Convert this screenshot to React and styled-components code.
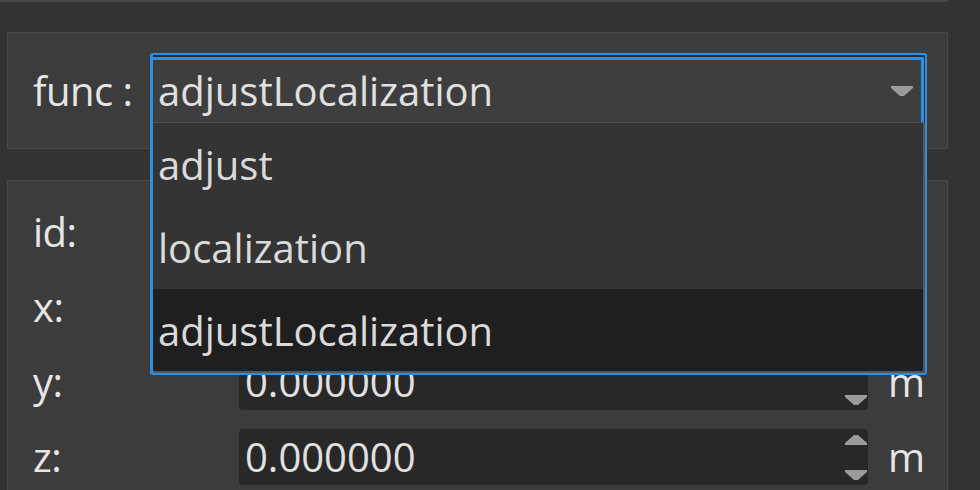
import React from "react";
import styled, { createGlobalStyle } from "styled-components";

const Global = createGlobalStyle`
  html, body { margin: 0; padding: 0; background: #333333; overflow: hidden; }
  body { font-family: "Open Sans", "Noto Sans", sans-serif; color: #dedede; }
`;

const Page = styled.div`
  width: 941px;
  padding-left: 7px;
  height: 490px;
  overflow: hidden;
`;

const TopEdge = styled.div`
  height: 2px;
  margin-left: -7px;
  background: #474747;
`;

const Panel = styled.div`
  box-sizing: border-box;
  background: #3c3c3c;
  border: 1px solid #484848;
  margin-top: ${(p) => p.$gap}px;
`;

const FuncPanel = styled(Panel)`
  height: 117px;
  display: flex;
  align-items: flex-start;
  padding: 20px 0 0 25px;
`;

const Label = styled.div`
  font-size: 40px;
  line-height: 56px;
  color: #e6e6e6;
  letter-spacing: -0.5px;
  white-space: nowrap;
`;

const FuncLabel = styled(Label)`
  width: 117px;
  margin-top: 10px;
`;

const ComboAnchor = styled.div`
  position: relative;
  width: 777px;
  height: 76px;
`;

const Popup = styled.div`
  position: absolute;
  top: 0;
  left: 0;
  width: 777px;
  box-sizing: border-box;
  border: 2px solid #2b8fe2;
  border-left-width: 3px;
  border-radius: 3px;
  padding: 2px 1px 0 0;
  background: #2a2a2a;
  z-index: 5;
`;

const ComboHeader = styled.div`
  box-sizing: border-box;
  height: 66px;
  background: #3e3e3e;
  border-top: 3px solid #2b8fe2;
  border-right: 3px solid #2b8fe2;
  border-bottom: 1px solid #4e4e4e;
  display: flex;
  align-items: center;
  padding: 0 8px 0 5px;
`;

const ComboText = styled.div`
  flex: 1;
  font-size: 40px;
  line-height: 60px;
  color: #e0e0e0;
`;

const Arrow = styled.svg`
  display: block;
  flex: none;
`;

const List = styled.div`
  background: #343434;
  border-right: 2px solid #555555;
  border-bottom: 2px solid #555555;
  margin-right: -1px;
`;

const Item = styled.div`
  height: ${(p) => p.$h}px;
  display: flex;
  align-items: center;
  padding-left: 5px;
  font-size: 40px;
  color: #dadada;
  background: ${(p) => (p.$active ? "#1f1f1f" : "transparent")};
`;

const FormPanel = styled(Panel)`
  height: 340px;
  padding: 23px 0 0 25px;
  display: grid;
  grid-template-columns: 206px 629px auto;
  grid-auto-rows: 56px;
  row-gap: 19px;
  align-content: start;
`;

const SpinBox = styled.div`
  box-sizing: border-box;
  background: #282828;
  border-radius: 4px;
  display: flex;
  align-items: stretch;
  padding: 0 1px 0 6px;
`;

const SpinText = styled.div`
  flex: 1;
  font-size: 40px;
  line-height: 56px;
  color: #e0e0e0;
`;

const SpinArrows = styled.div`
  width: 22px;
  display: flex;
  flex-direction: column;
  justify-content: space-between;
  padding: 6px 0 5px;
`;

const Unit = styled(Label)`
  padding-left: 20px;
  letter-spacing: 0;
`;

const Tri = ({ up }) => (
  <Arrow width="22" height="10" viewBox="0 0 22 10">
    {up ? (
      <polygon points="0,10 22,10 22,8 13,0 9,0 0,8" fill="#9b9b9b" />
    ) : (
      <polygon points="0,0 22,0 22,2 13,10 9,10 0,2" fill="#9b9b9b" />
    )}
  </Arrow>
);

const rows = [
  { label: "id:", value: "" },
  { label: "x:", value: "0.000000" },
  { label: "y:", value: "0.000000" },
  { label: "z:", value: "0.000000" },
];

export default function App() {
  return (
    <>
      <Global />
      <Page>
        <TopEdge />
        <FuncPanel $gap={30}>
          <FuncLabel>func :</FuncLabel>
          <ComboAnchor>
            <Popup>
              <ComboHeader>
                <ComboText>adjustLocalization</ComboText>
                <Tri />
              </ComboHeader>
              <List>
                <Item $h={83}>adjust</Item>
                <Item $h={83}>localization</Item>
                <Item $h={82} $active>adjustLocalization</Item>
              </List>
            </Popup>
          </ComboAnchor>
        </FuncPanel>
        <FormPanel $gap={31}>
          {rows.map((r) => (
            <React.Fragment key={r.label}>
              <Label>{r.label}</Label>
              <SpinBox>
                <SpinText>{r.value}</SpinText>
                {r.value && (
                  <SpinArrows>
                    <Tri up />
                    <Tri />
                  </SpinArrows>
                )}
              </SpinBox>
              <Unit>{r.value ? "m" : ""}</Unit>
            </React.Fragment>
          ))}
        </FormPanel>
      </Page>
    </>
  );
}
